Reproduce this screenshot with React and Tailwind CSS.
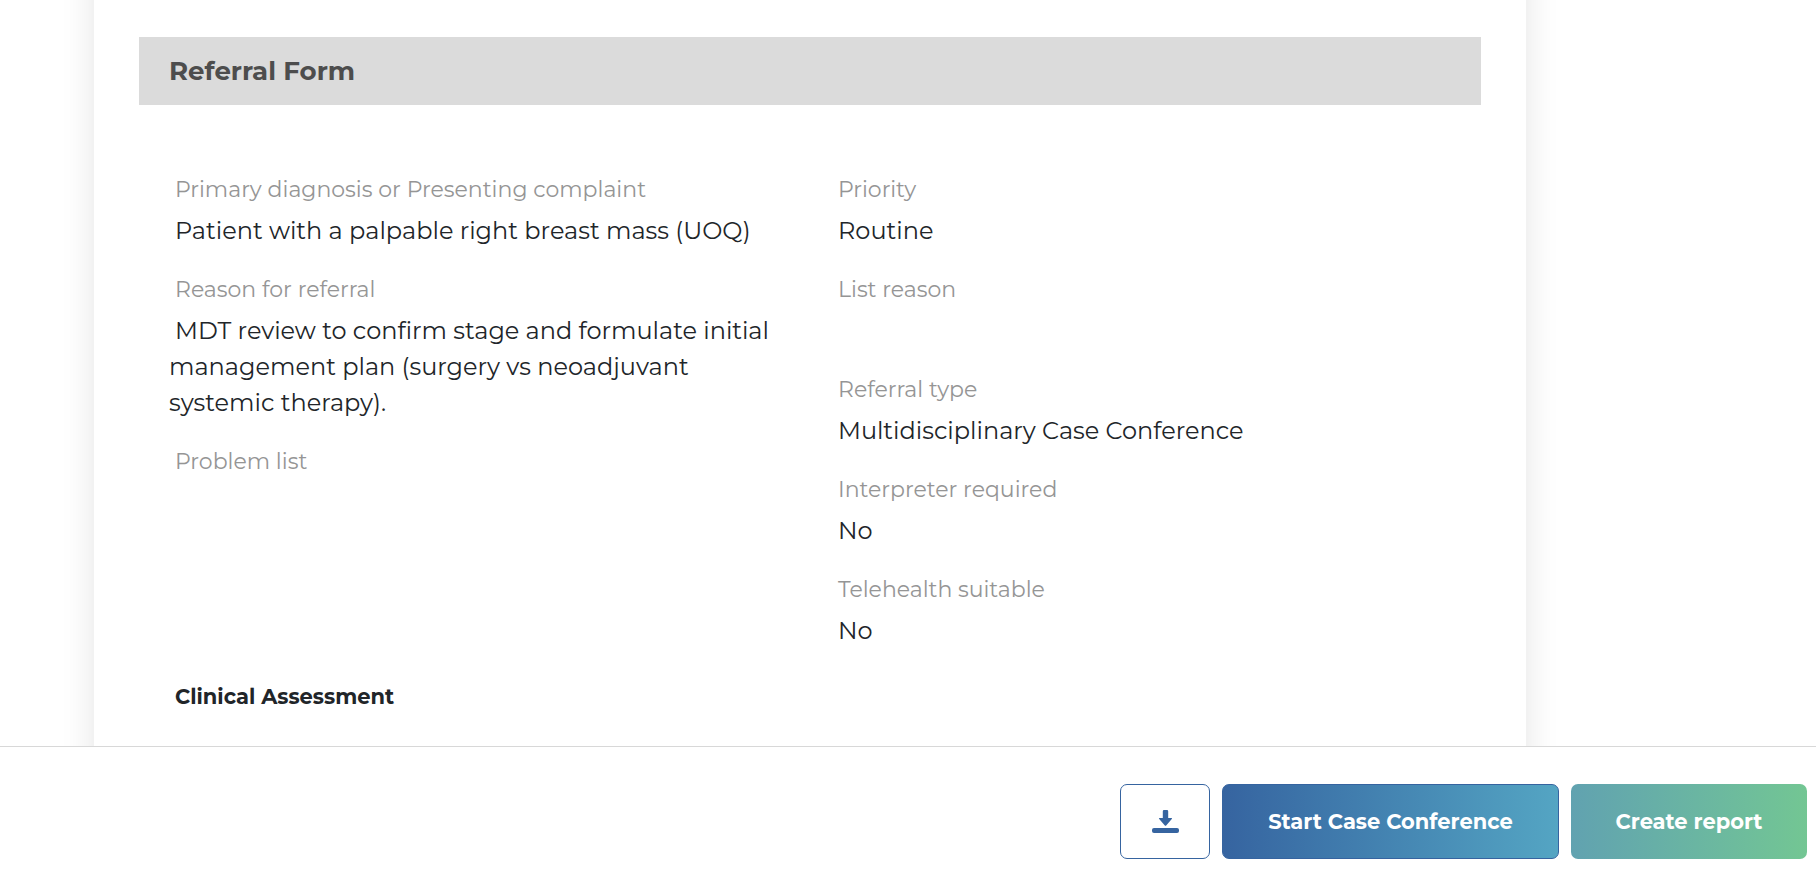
const leftFields = [
  { label: "Primary diagnosis or Presenting complaint", value: "Patient with a palpable right breast mass (UOQ)" },
  {
    label: "Reason for referral",
    value: "MDT review to confirm stage and formulate initial management plan (surgery vs neoadjuvant systemic therapy).",
  },
  { label: "Problem list", value: "" },
];

const rightFields = [
  { label: "Priority", value: "Routine" },
  { label: "List reason", value: "" },
  { label: "Referral type", value: "Multidisciplinary Case Conference" },
  { label: "Interpreter required", value: "No" },
  { label: "Telehealth suitable", value: "No" },
];

function FieldList({ fields }) {
  return (
    <dl className="flex min-w-0 flex-col gap-6">
      {fields.map(({ label, value }) => (
        <div key={label} className="flex flex-col gap-1.5">
          <dt className="indent-1.5 text-[22px] leading-[34px] text-[#959595]">{label}</dt>
          <dd className="min-h-9 indent-1.5 text-[24px] leading-9 text-[#212529]">{value}</dd>
        </div>
      ))}
    </dl>
  );
}

function DownloadIcon() {
  return (
    <svg width="27" height="24" viewBox="0 0 27 24" fill="#3664a0" aria-hidden="true">
      <path d="M12 0h3q1.2 0 1.2 1.2V8h3.2q1.2.1.4 1.1l-5.4 6.2q-.9 1-1.8 0L7.2 9.1Q6.4 8.1 7.6 8h3.2V1.2Q10.8 0 12 0z" />
      <rect x="0" y="18" width="27" height="5" rx="2" />
    </svg>
  );
}

export default function App() {
  return (
    <div className="flex h-screen flex-col bg-white font-['Montserrat','Inter',sans-serif]">
      <main className="min-h-0 flex-1 overflow-hidden">
        <article className="-mt-10 mr-[290px] ml-[94px] bg-white px-[45px] pt-[77px] pb-20 shadow-[0_0_32px_rgba(0,0,0,0.11)]">
          <h1 className="bg-[#dbdbdb] px-[30px] py-4 text-[26px] leading-9 font-bold text-[#4d4d4d]">
            Referral Form
          </h1>
          <div className="grid grid-cols-2 gap-11 px-[30px] pt-[68px]">
            <FieldList fields={leftFields} />
            <FieldList fields={rightFields} />
          </div>
          <h2 className="px-9 pt-8 text-[21px] leading-8 font-bold text-[#212529]">Clinical Assessment</h2>
        </article>
      </main>
      <footer className="flex justify-end gap-3 border-t border-[#d8d8d8] bg-white pt-[37px] pr-[9px] pb-[17px]">
        <button
          type="button"
          aria-label="Download"
          className="flex h-[75px] w-[90px] items-center justify-center rounded-[7px] border border-[#3664a0] bg-white"
        >
          <DownloadIcon />
        </button>
        <button
          type="button"
          className="h-[75px] w-[337px] rounded-[7px] border border-[#3664a0] bg-linear-to-r from-[#3664a0] to-[#54a5c3] text-[21px] font-bold text-white"
        >
          Start Case Conference
        </button>
        <button
          type="button"
          className="h-[75px] w-[236px] rounded-[7px] bg-linear-to-r from-[#61a2b0] to-[#73c693] text-[21px] font-bold text-white"
        >
          Create report
        </button>
      </footer>
    </div>
  );
}
